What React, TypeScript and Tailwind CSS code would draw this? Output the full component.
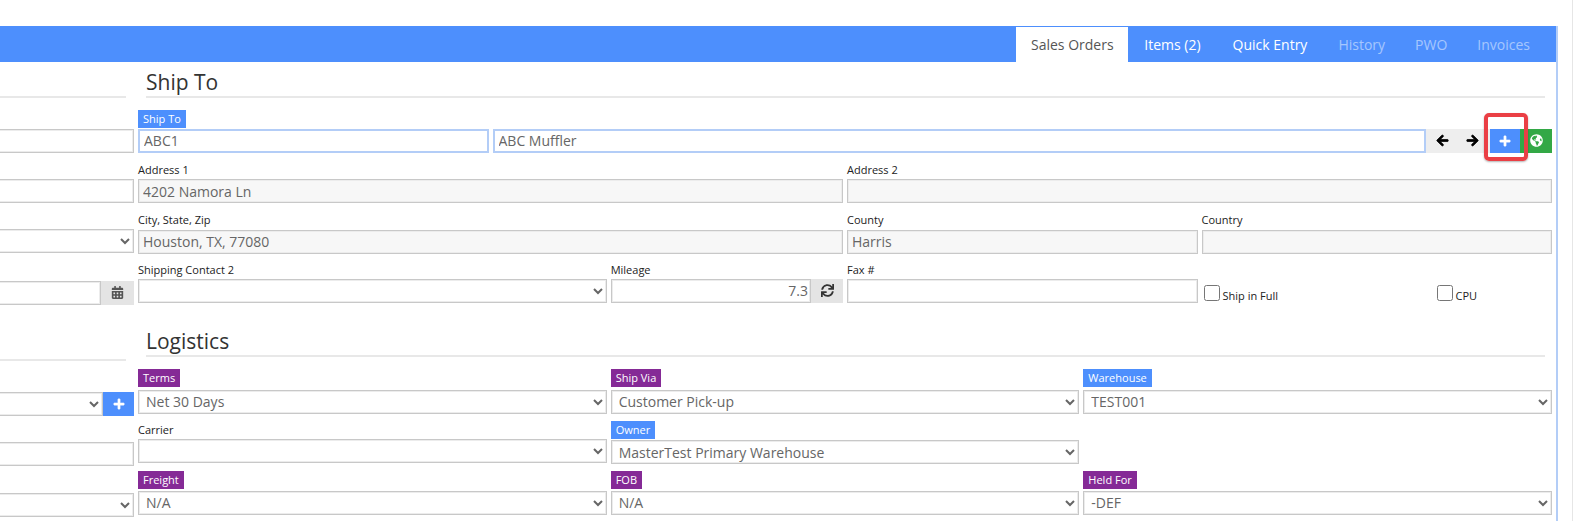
import { FaArrowLeft, FaArrowRight, FaCalendarAlt, FaGlobeAmericas, FaPlus, FaSync } from "react-icons/fa";

const box = "border border-[#c8c8c8] shadow-[inset_0_0_0_1px_#ececec]";
const inputBase = "h-6 w-full min-w-0 px-[4px] text-[14px] leading-5 text-[#666] outline-none";
const focused = "border-2 border-[#b3cdf7] bg-white px-[3px]";

function Label({ text }: { text: string }) {
  return <div className="h-[16px] text-[11px] leading-[13px] text-[#222]">{text}</div>;
}

function Tag({
  text,
  color,
  wrap = "h-[18px]",
}: {
  text: string;
  color: "blue" | "purple";
  wrap?: string;
}) {
  return (
    <div className={`flex items-start ${wrap}`}>
      <span
        className={`h-[18px] px-[5px] text-[11px] leading-[18px] text-white ${
          color === "blue" ? "bg-[#4d8ffd]" : "bg-[#852a96]"
        }`}
      >
        {text}
      </span>
    </div>
  );
}

function Select({ value, tall }: { value?: string; tall?: boolean }) {
  return (
    <select
      defaultValue={value ?? ""}
      className={`h-6 w-full min-w-0 bg-white text-[14px] text-[#666] outline-none ${box} ${
        tall ? "px-[3px]" : "px-0"
      }`}
    >
      <option value={value ?? ""}>{value ?? ""}</option>
    </select>
  );
}

function Field({
  label,
  value,
  span,
  muted,
}: {
  label: string;
  value?: string;
  span: string;
  muted?: boolean;
}) {
  return (
    <div className={span}>
      <Label text={label} />
      <input
        readOnly
        value={value ?? ""}
        className={`${inputBase} ${box} ${muted ? "bg-[#f7f7f7]" : "bg-white"}`}
      />
    </div>
  );
}

function SelectField({
  label,
  value,
  tag,
  wrap = "h-[19px]",
}: {
  label: string;
  value?: string;
  tag?: "blue" | "purple";
  wrap?: string;
}) {
  return (
    <div className={tag ? "col-span-4" : "col-span-4 mb-px self-end"}>
      {tag ? <Tag text={label} color={tag} wrap={wrap} /> : <Label text={label} />}
      <Select value={value} tall />
    </div>
  );
}

function Heading({ text }: { text: string }) {
  return (
    <div className="ml-2 mr-[7px] h-[36px] border-b-2 border-[#e8e8e8] text-[21px] leading-[40px] text-[#333]">
      {text}
    </div>
  );
}

function LeftColumn() {
  const input = `${inputBase} ${box} bg-white`;
  return (
    <div className="w-[134px] shrink-0">
      <div className="mr-2 h-[36px] border-b-2 border-[#e8e8e8]" />
      <div className="mt-[30px] -ml-8 w-[166px]">
        <input readOnly className={input} />
      </div>
      <div className="mt-[26px] -ml-8 w-[166px]">
        <input readOnly className={input} />
      </div>
      <div className="mt-[25px] -ml-8 w-[166px]">
        <Select />
      </div>
      <div className="mt-[28px] -ml-8 flex h-6 w-[166px]">
        <input readOnly className={input} />
        <div className="flex w-[33px] shrink-0 items-center justify-center bg-[#e4e4e4] text-[#555]">
          <FaCalendarAlt className="h-[13px] w-[13px]" />
        </div>
      </div>
      <div className="mr-2 mt-[40px] h-[16px] border-b-2 border-[#e8e8e8]" />
      <div className="mt-[31px] -ml-8 flex h-6 w-[166px]">
        <Select />
        <div className="flex w-[31px] shrink-0 items-center justify-center bg-[#4d8ffd] text-white">
          <FaPlus className="h-[12px] w-[12px]" stroke="currentColor" strokeWidth={20} />
        </div>
      </div>
      <div className="mt-[26px] -ml-8 w-[166px]">
        <input readOnly className={input} />
      </div>
      <div className="mt-[26px] -ml-8 w-[166px]">
        <Select />
      </div>
    </div>
  );
}

function ShipTo() {
  return (
    <>
      <Heading text="Ship To" />
      <div className="mt-[12px] grid grid-cols-12 gap-x-1 gap-y-[10px]">
        <div className="col-span-3">
          <Tag text="Ship To" color="blue" />
          <input readOnly value="ABC1" className={`${inputBase} ${focused}`} />
        </div>
        <div className="col-span-9 flex items-end">
          <input readOnly value="ABC Muffler" className={`${inputBase} ${focused}`} />
          <div className="flex h-6 w-[64px] shrink-0 items-center justify-between bg-[#eee] pl-[10px] pr-[11px] text-black">
            <FaArrowLeft className="h-[13px] w-[13px]" stroke="currentColor" strokeWidth={30} />
            <FaArrowRight className="h-[13px] w-[13px]" stroke="currentColor" strokeWidth={30} />
          </div>
          <div className="flex h-6 w-[30px] shrink-0 items-center justify-center bg-[#4d8ffd] text-white">
            <FaPlus className="h-[12px] w-[12px]" stroke="currentColor" strokeWidth={20} />
          </div>
          <div className="flex h-6 w-[32px] shrink-0 items-center justify-center bg-[#33a846] text-white">
            <FaGlobeAmericas className="h-[13px] w-[13px]" />
          </div>
        </div>
        <Field span="col-span-6" label="Address 1" value="4202 Namora Ln" muted />
        <Field span="col-span-6" label="Address 2" muted />
        <Field span="col-span-6" label="City, State, Zip" value="Houston, TX, 77080" muted />
        <Field span="col-span-3" label="County" value="Harris" muted />
        <Field span="col-span-3" label="Country" muted />
        <div className="col-span-4 -mt-px">
          <Label text="Shipping Contact 2" />
          <Select />
        </div>
        <div className="col-span-2 -mt-px">
          <Label text="Mileage" />
          <div className="flex h-6">
            <input
              readOnly
              value="7.3"
              className={`${inputBase} ${box} bg-white pr-[2px] text-right`}
            />
            <div className="flex w-[32px] shrink-0 items-center justify-center bg-[#e4e4e4] text-[#333]">
              <FaSync className="h-[13px] w-[13px]" />
            </div>
          </div>
        </div>
        <Field span="col-span-3 -mt-px" label="Fax #" />
        <div className="col-span-3 -mt-px flex pl-[2px] pt-[22px]">
          <label className="flex h-[18px] w-[233px] items-end text-[11px] leading-[14px] text-[#222]">
            <input type="checkbox" className="mr-[3px] h-4 w-4 self-start" />
            Ship in Full
          </label>
          <label className="flex h-[18px] items-end text-[11px] leading-[14px] text-[#222]">
            <input type="checkbox" className="mr-[3px] h-4 w-4 self-start" />
            CPU
          </label>
        </div>
      </div>
    </>
  );
}

function Logistics() {
  return (
    <>
      <div className="mt-[18px]">
        <Heading text="Logistics" />
      </div>
      <div className="mt-[12px] grid grid-cols-12 gap-x-1 gap-y-[7px]">
        <SelectField label="Terms" value="Net 30 Days" tag="purple" wrap="h-[20px]" />
        <SelectField label="Ship Via" value="Customer Pick-up" tag="purple" wrap="h-[20px]" />
        <SelectField label="Warehouse" value="TEST001" tag="blue" wrap="h-[20px]" />
        <SelectField label="Carrier" />
        <SelectField label="Owner" value="MasterTest Primary Warehouse" tag="blue" />
        <div className="col-span-4" />
        <SelectField label="Freight" value="N/A" tag="purple" />
        <SelectField label="FOB" value="N/A" tag="purple" />
        <SelectField label="Held For" value="-DEF" tag="purple" />
        <div className="col-span-8" />
        <div className="col-span-4">
          <div className="h-[18px] w-[37px] bg-[#4d8ffd]" />
        </div>
      </div>
    </>
  );
}

export default function App() {
  const tabs = [
    { name: "Items (2)", cls: "px-4 text-white" },
    { name: "Quick Entry", cls: "px-4 text-white" },
    { name: "History", cls: "px-[15px] text-white/50" },
    { name: "PWO", cls: "px-[15px] text-white/50" },
    { name: "Invoices", cls: "px-[15px] text-white/50" },
  ];

  return (
    <div
      className="relative h-[521px] w-[1573px] overflow-hidden border-r border-[#e6e6e6] bg-white pt-[26px]"
      style={{ fontFamily: '"Open Sans", sans-serif' }}
    >
      <div className="h-[495px] w-[1558px] border-r-2 border-[#b3cdf7]">
        <div className="flex h-9 items-end justify-end bg-[#4d8ffd] pr-[11px] text-[14px]">
          <div className="flex h-[35px] w-[112px] items-center justify-center bg-white text-[#555]">
            Sales Orders
          </div>
          {tabs.map((t) => (
            <div key={t.name} className={`flex h-[35px] items-center ${t.cls}`}>
              {t.name}
            </div>
          ))}
        </div>
        <div className="flex gap-1">
          <LeftColumn />
          <div className="w-[1414px] shrink-0">
            <ShipTo />
            <Logistics />
          </div>
        </div>
      </div>
      <div className="absolute left-[1484px] top-[113px] h-[48px] w-[44px] rounded-[5px] border-4 border-[#ea3f45] shadow-[0_1px_2px_rgba(0,0,0,0.3)]" />
    </div>
  );
}
